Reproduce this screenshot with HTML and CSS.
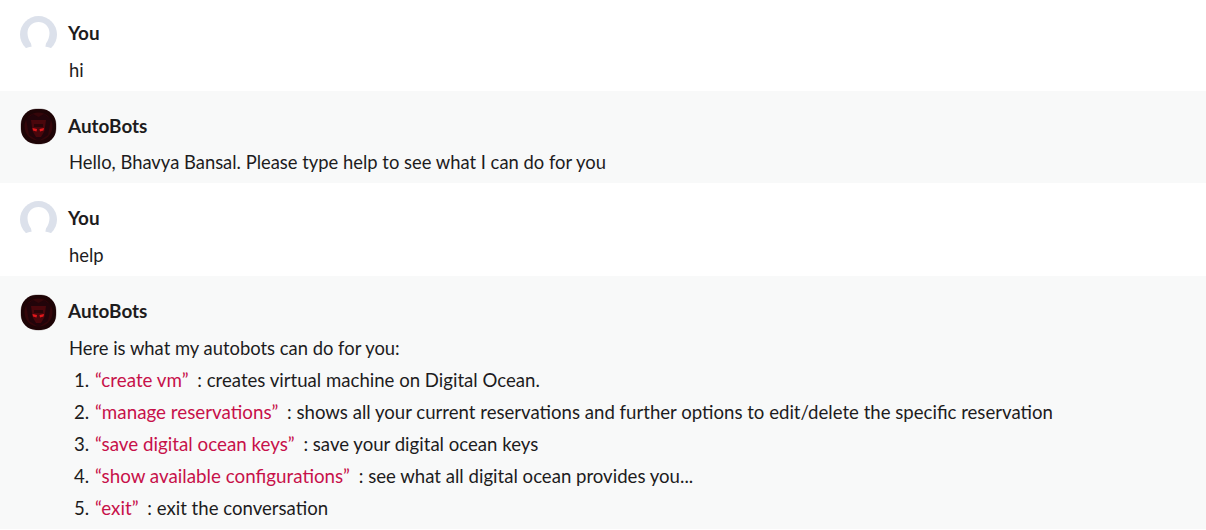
FILE: index.html
```html
<!DOCTYPE html>
<html lang="en">
<head>
  <meta charset="utf-8">
  <meta name="viewport" content="width=device-width, initial-scale=1">
  <title>AutoBots chat</title>
  <link rel="stylesheet" href="styles.css">
</head>
<body>
  <div id="chat">
    <div class="msg">
      <div class="msg-head">
        <svg class="avatar" viewBox="0 0 37 37"><use href="#user-icon"/></svg>
        <span class="msg-name">You</span>
      </div>
      <div class="msg-body">hi</div>
    </div>

    <div class="msg msg-bot">
      <div class="msg-head">
        <svg class="avatar" viewBox="0 0 37 37"><use href="#bot-icon"/></svg>
        <span class="msg-name">AutoBots</span>
      </div>
      <div class="msg-body">Hello, Bhavya Bansal. Please type help to see what I can do for you</div>
    </div>

    <div class="msg">
      <div class="msg-head">
        <svg class="avatar" viewBox="0 0 37 37"><use href="#user-icon"/></svg>
        <span class="msg-name">You</span>
      </div>
      <div class="msg-body">help</div>
    </div>

    <div class="msg msg-bot msg-help">
      <div class="msg-head">
        <svg class="avatar" viewBox="0 0 37 37"><use href="#bot-icon"/></svg>
        <span class="msg-name">AutoBots</span>
      </div>
      <div class="msg-body">
        Here is what my autobots can do for you:
        <ol class="cmd-list">
          <li><span class="cmd">“create vm”</span> : creates virtual machine on Digital Ocean.</li>
          <li><span class="cmd">“manage reservations”</span> : shows all your current reservations and further options to edit/delete the specific reservation</li>
          <li><span class="cmd">“save digital ocean keys”</span> : save your digital ocean keys</li>
          <li><span class="cmd">“show available configurations”</span> : see what all digital ocean provides you...</li>
          <li><span class="cmd">“exit”</span> : exit the conversation</li>
        </ol>
      </div>
    </div>
  </div>

  <svg class="icon-defs" width="0" height="0">
    <defs>
      <symbol id="user-icon" viewBox="0 0 37 37">
        <circle cx="18.5" cy="18.5" r="18.5" fill="#dce1eb"/>
        <ellipse cx="18.5" cy="46" rx="26" ry="16" fill="#fff"/>
        <path d="M18.5 6c-6 0-11 4.500-11 11 0 4 1.500 7.500 3.500 10.500l1 5h13l1-5c2-3 3.500-6.500 3.500-10.500 0-6.500-5-11-11-11z" fill="#fff"/>
      </symbol>
      <symbol id="bot-icon" viewBox="0 0 37 37">
        <circle cx="18.5" cy="18.5" r="18.5" fill="#d2cfcf"/>
        <rect x="1" y="1" width="35" height="35" rx="15" fill="#1e0406"/>
        <circle cx="18.500" cy="18.500" r="14" fill="#35060a"/>
        <path d="M6 11l7-5 5.500 3 5.500-3 7 5-3 16-9.500 6-9.500-6z" fill="#22040a"/>
        <path d="M11 12h15l-1.500 11-3.500 6h-5l-3.500-6z" fill="#4a070c"/>
        <path d="M14 16h9v3h-9z" fill="#2a0508"/>
        <path d="M12.500 20l4.500 1-.5 2.500-3.500-1zM24 20l-4.500 1 .5 2.500 3.500-1z" fill="#e2181c"/>
      </symbol>
    </defs>
  </svg>
</body>
</html>
```

FILE: styles.css
```css
:root {
  --text-color: #1d1c1d;
  --bot-bg: #f8f9f9;
  --cmd-color: #c7114a;
}
* { box-sizing: border-box; }
body {
  margin: 0;
  height: 530px;
  overflow: hidden;
  font-family: Lato, 'Noto Sans', sans-serif;
  font-size: 18.4px;
  line-height: 32px;
  color: var(--text-color);
  background-color: #fff;
}
#chat {
  margin-top: -1.4px;
}
.msg {
  padding: 17.4px 20px 5px;
}
.msg-bot {
  background-color: var(--bot-bg);
}
.msg-head {
  display: flex;
  align-items: center;
  gap: 11px;
  height: 37px;
}
.avatar {
  width: 37px;
  height: 37px;
  flex: none;
}
.msg-name {
  font-size: 18.9px;
  font-weight: 700;
  padding-bottom: 2.4px;
}
.msg-body {
  margin-top: 1px;
  padding-left: 49px;
}
.msg-help {
  padding-top: 18px;
}
.msg-help .msg-body {
  margin-top: 1.4px;
}
.cmd-list {
  margin: 0;
  padding-left: 26px;
  font-size: 18.6px;
}
.cmd-list li::marker {
  content: counter(list-item) ".\00a0\200a";
}
.cmd {
  color: var(--cmd-color);
  font-size: 18.8px;
  margin-right: 4px;
}
.icon-defs {
  position: absolute;
}
```
